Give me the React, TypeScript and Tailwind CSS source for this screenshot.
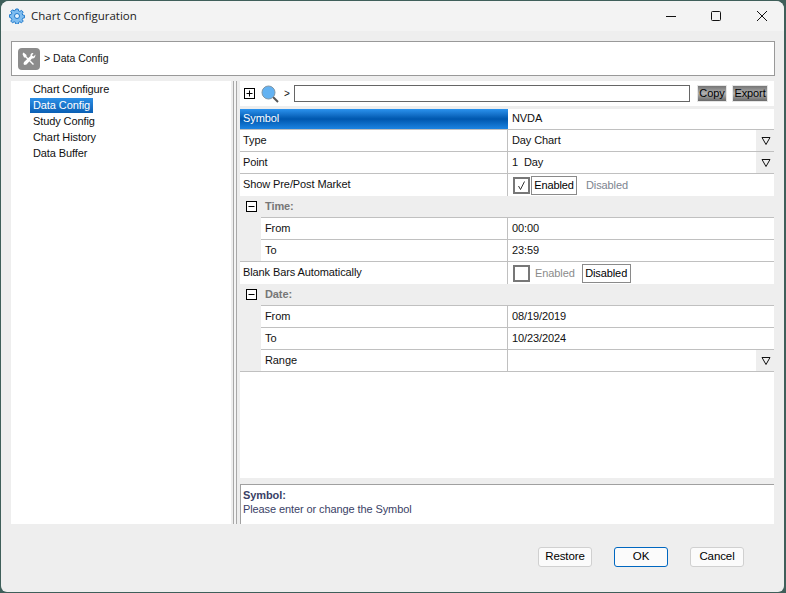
import React from "react";

const font = "font-['Liberation_Sans',Arial,sans-serif]";

const PlusMinus = ({ minus = false }: { minus?: boolean }) => (
  <svg width="11" height="11" viewBox="0 0 11 11" className="shrink-0">
    <rect x="0.5" y="0.5" width="10" height="10" fill="#fff" stroke="#000" />
    <path d="M2.5 5.5h6" stroke="#000" />
    {!minus && <path d="M5.5 2.5v6" stroke="#000" />}
  </svg>
);

const Arrow = () => (
  <div className="ml-auto w-[18px] h-full pl-px bg-[#eeeeee] flex items-center justify-center">
    <svg width="10" height="10" viewBox="0 0 10 10">
      <path d="M1 1.5h8L5 8.500z" fill="none" stroke="#111" strokeWidth="1" />
    </svg>
  </div>
);

const Toggle = ({ on }: { on: boolean }) => (
  <div className="flex items-center pl-[5px] h-full">
    <div className="w-[17px] h-[17px] border-2 border-[#777] bg-white flex items-center justify-center">
      {on && (
        <svg width="11" height="11" viewBox="0 0 11 11">
          <path d="M2.500 6l2 3.500L8.500 1.500" fill="none" stroke="#333" strokeWidth="1" />
        </svg>
      )}
    </div>
    {on ? (
      <>
        <span className="ml-px w-[46px] h-[19px] text-center border border-[#8a8a8a] text-black leading-[17px]">Enabled</span>
        <span className="ml-[9px] text-[#7d8590]">Disabled</span>
      </>
    ) : (
      <>
        <span className="ml-[5px] text-[#8b8b8b]">Enabled</span>
        <span className="ml-[7px] w-[49px] h-[19px] text-center border border-[#8a8a8a] text-black leading-[17px]">Disabled</span>
      </>
    )}
  </div>
);

const Row = ({
  label,
  sub = false,
  last = false,
  flush = false,
  children,
  arrow = false,
}: {
  label: string;
  sub?: boolean;
  last?: boolean;
  flush?: boolean;
  children?: React.ReactNode;
  arrow?: boolean;
}) => (
  <div className="flex h-[22px] bg-[#eeeeee]">
    {sub && <div className={`w-[21px] shrink-0 ${last ? "border-b border-[#c0c0c0]" : ""}`} />}
    <div className={`flex flex-1 min-w-0 bg-white ${flush ? "" : "border-b border-[#c0c0c0]"}`}>
      <div className={`flex-1 min-w-0 leading-[21px] border-r border-[#c0c0c0] ${sub ? "pl-[4px]" : "pl-[3px]"}`}>{label}</div>
      <div className="w-[266px] shrink-0 flex items-center">
        {typeof children === "string" ? <span className="pl-[4px]">{children}</span> : children}
        {arrow && <Arrow />}
      </div>
    </div>
  </div>
);

const Group = ({ label }: { label: string }) => (
  <div className="h-[22px] flex flex-col bg-[#eeeeee]">
    <div className="flex-1 flex items-center pl-[6px]">
      <PlusMinus minus />
      <span className="ml-[8px] font-bold text-[#777]">{label}</span>
    </div>
    <div className="ml-[21px] h-px bg-[#c0c0c0]" />
  </div>
);

const DialogButton = ({ label, primary = false }: { label: string; primary?: boolean }) => (
  <button
    className={`w-[54px] h-[20px] rounded-[3px] bg-[#fbfbfb] text-[11.5px] text-black border ${
      primary ? "border-[#0067c0]" : "border-[#d0d0d0]"
    }`}
  >
    {label}
  </button>
);

const ToolButton = ({ label, width }: { label: string; width: string }) => (
  <div className={`${width} h-[17px] flex items-center justify-center bg-gradient-to-b from-[#767676] via-[#b0b0b0] to-[#6a6a6a] text-black border border-[#e5e5e5]`}>
    {label}
  </div>
);

const App: React.FC = () => {
  const nav = ["Chart Configure", "Data Config", "Study Config", "Chart History", "Data Buffer"];

  return (
    <div className={`w-[786px] h-[593px] bg-[#3f5f5a] pl-px pt-px pr-[2px] pb-[1px] overflow-hidden ${font} text-[11px] tracking-[-0.1px] text-[#111]`}>
      <div className="w-full h-full flex flex-col bg-[#eeeeee] rounded-t-[8px] rounded-b-[6px] overflow-hidden">
        {/* Title bar */}
        <div className="h-[30px] shrink-0 flex items-center bg-[#f3f3f3] pl-[8px]">
          <svg width="16" height="16" viewBox="0 0 16 16" className="shrink-0">
            <path
              d="M6.800 1h2.400l.4 1.900 1.300.5 1.600-1 1.700 1.700-1 1.600.5 1.300 1.900.4v2.400l-1.900.4-.5 1.300 1 1.600-1.700 1.700-1.600-1-1.300.5-.4 1.900H6.800l-.4-1.900-1.300-.5-1.600 1-1.700-1.700 1-1.600-.5-1.300L.4 9.200V6.800l1.900-.4.5-1.300-1-1.600 1.700-1.700 1.600 1 1.300-.5z"
              fill="#7fbdf0"
              stroke="#1f78c9"
            />
            <circle cx="8" cy="8" r="2.500" fill="#e8f4fd" stroke="#1f78c9" />
          </svg>
          <span className="ml-[6px] text-[11.5px] tracking-normal font-['Open_Sans',sans-serif] text-[#222]">Chart Configuration</span>
          <div className="ml-auto flex items-center">
            <svg width="12" height="12" viewBox="0 0 12 12" className="mr-[33px]">
              <path d="M1 6.500h10" stroke="#111" />
            </svg>
            <svg width="12" height="12" viewBox="0 0 12 12" className="mr-[34px]">
              <rect x="1.500" y="1.500" width="9" height="9" rx="1" fill="none" stroke="#111" />
            </svg>
            <svg width="12" height="12" viewBox="0 0 12 12" className="mr-[16px]">
              <path d="M1 1l10 10M11 1L1 11" stroke="#111" />
            </svg>
          </div>
        </div>

        <div className="flex-1 flex flex-col px-[10px] pt-[10px] min-h-0">
          {/* Breadcrumb */}
          <div className="h-[35px] shrink-0 w-[764px] bg-white border border-[#999] flex items-center pl-[6px]">
            <div className="w-[22px] h-[22px] rounded-[4px] bg-[#8c8c8c] flex items-center justify-center">
              <svg width="16" height="16" viewBox="0 0 16 16">
                <path d="M2.500 1.500l3 2.500v1.500l7.500 7.500-1 1-7.500-7.500H3L1.500 3z" fill="#fff" />
                <path d="M14.500 3.500l-2 2-1.500-1 1.500-2.500c-2-.5-3.500 1-3 3L3 11l-.5 2 1 1 2-.5 5.500-6c2 .5 3.500-1.500 3.500-4z" fill="#fff" />
              </svg>
            </div>
            <span className="ml-[4px] text-[10.5px] tracking-normal">&gt; Data Config</span>
          </div>

          <div className="flex mt-[5px] h-[443px] w-[763px]">
            {/* Nav tree */}
            <div className="w-[220px] shrink-0 bg-white pl-[19px]">
              {nav.map((item) => (
                <div key={item} className="h-[16px] flex items-center">
                  <span
                    className={
                      item === "Data Config"
                        ? "bg-gradient-to-b from-[#2b8fe6] to-[#0a5fb4] text-white px-[3px] h-[15px] leading-[15px]"
                        : "px-[3px]"
                    }
                  >
                    {item}
                  </span>
                </div>
              ))}
            </div>

            {/* Splitter */}
            <div className="w-[9px] shrink-0 flex justify-center">
              <div className="ml-[-2px] w-[4px] h-full border-x border-[#a8a8a8] bg-[#f4f4f4]" />
            </div>

            <div className="flex-1 min-w-0 flex flex-col">
              {/* Search bar */}
              <div className="h-[25px] shrink-0 bg-white flex items-center pl-[4px]">
                <PlusMinus />
                <svg width="18" height="18" viewBox="0 0 18 18" className="ml-[6px] shrink-0">
                  <path d="M11 11l6 6" stroke="#555" strokeWidth="2" />
                  <circle cx="7.500" cy="7.500" r="6.500" fill="#63b2f2" stroke="#7f97a8" />
                </svg>
                <span className="ml-[5px] w-[6px] text-[10px]">&gt;</span>
                <div className="ml-[4px] w-[396px] h-[17px] border border-[#666] bg-white" />
                <div className="ml-[7px] flex gap-[5px]">
                  <ToolButton label="Copy" width="w-[30px]" />
                  <ToolButton label="Export" width="w-[36px]" />
                </div>
              </div>

              {/* Property table */}
              <div className="mt-[3px] flex-1 min-h-0 bg-white">
                <div className="flex h-[21px] bg-white border-b border-[#c0c0c0]">
                  <div className="flex-1 pl-[3px] leading-[19px] text-white bg-gradient-to-b from-[#2b93ee] via-[#0057ae] to-[#1b84e2]">
                    Symbol
                  </div>
                  <div className="w-[266px] shrink-0 pl-[4px] leading-[19px]">NVDA</div>
                </div>
                <Row label="Type" arrow>Day Chart</Row>
                <Row label="Point" arrow>1&nbsp;&nbsp;Day</Row>
                <Row label="Show Pre/Post Market" flush>
                  <Toggle on />
                </Row>
                <Group label="Time:" />
                <Row label="From" sub>00:00</Row>
                <Row label="To" sub last>23:59</Row>
                <Row label="Blank Bars Automatically" flush>
                  <Toggle on={false} />
                </Row>
                <Group label="Date:" />
                <Row label="From" sub>08/19/2019</Row>
                <Row label="To" sub>10/23/2024</Row>
                <Row label="Range" sub last arrow />
              </div>

              {/* Description */}
              <div className="mt-[6px] h-[40px] shrink-0 bg-white border-t border-l border-[#a0a0a0] pl-[2px] pt-[3px] text-[#3a3f66] leading-[14px]">
                <div className="font-bold">Symbol:</div>
                <div>Please enter or change the Symbol</div>
              </div>
            </div>
          </div>

          {/* Footer */}
          <div className="flex justify-end gap-[22px] pr-[31px] pt-[23px] w-[764px]">
            <DialogButton label="Restore" />
            <DialogButton label="OK" primary />
            <DialogButton label="Cancel" />
          </div>
        </div>
      </div>
    </div>
  );
};

export default App;
